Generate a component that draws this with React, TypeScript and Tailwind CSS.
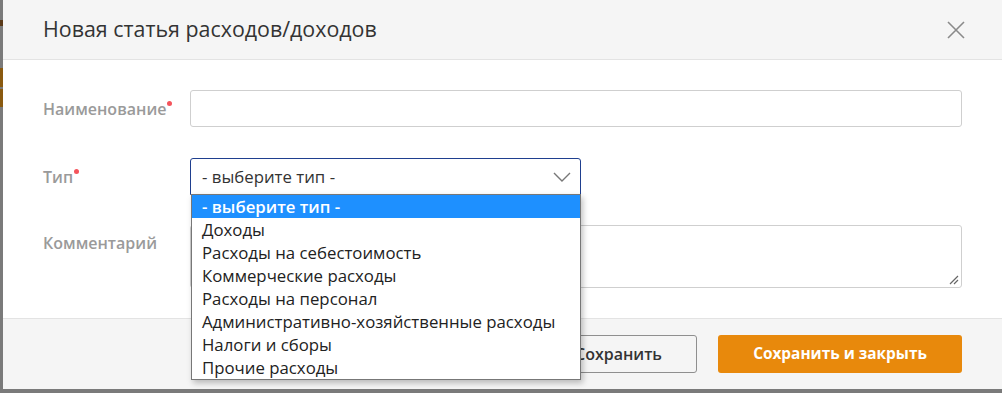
import React from 'react';

const OPTIONS = [
    '- выберите тип -',
    'Доходы',
    'Расходы на себестоимость',
    'Коммерческие расходы',
    'Расходы на персонал',
    'Административно-хозяйственные расходы',
    'Налоги и сборы',
    'Прочие расходы',
];

const Required = () => (
    <span className="absolute -right-[6px] top-[3px] w-[5px] h-[5px] rounded-full bg-[#f4545c]" />
);

const App: React.FC = () => {
    return (
        <div className="w-[1002px] h-[393px] overflow-hidden bg-[#7a7a7a] flex font-['Open_Sans',_sans-serif]">
            {/* page behind the modal */}
            <div className="w-[3px] shrink-0 flex flex-col">
                <div className="h-[20px]" />
                <div className="h-[6px] bg-[#5a3a1a]" />
                <div className="h-[42px]" />
                <div className="h-[19px] bg-[#8a5a10]" />
                <div className="h-[2px]" />
                <div className="h-[18px] bg-[#8a5a10]" />
            </div>

            <div className="w-[999px] h-[389px] bg-white flex flex-col relative">
                {/* header */}
                <div className="h-[60px] shrink-0 bg-[#f5f5f5] border-b border-[#e3e3e3] flex items-center justify-between pl-[40px] pr-[36px]">
                    <h2 className="text-[21.4px] text-[#333]">Новая статья расходов/доходов</h2>
                    <svg width="20" height="20" viewBox="0 0 20 20" className="text-[#8a8a8a]">
                        <path d="M2 2 L18 18 M18 2 L2 18" stroke="currentColor" strokeWidth="1.6" fill="none" />
                    </svg>
                </div>

                {/* body */}
                <div className="flex-1 flex flex-col pl-[40px] pr-[40px] pt-[30px] gap-[31px]">
                    <div className="flex items-center">
                        <label className="w-[147px] shrink-0 text-[16px] font-semibold text-[#9a9a9a]">
                            <span className="relative">Наименование<Required /></span>
                        </label>
                        <div className="flex-1 h-[37px] border border-[#cfcfcf] rounded-[3px] bg-white" />
                    </div>

                    <div className="flex items-center">
                        <label className="w-[147px] shrink-0 text-[16px] font-semibold text-[#9a9a9a]">
                            <span className="relative">Тип<Required /></span>
                        </label>
                        <div className="relative w-[391px]">
                            <div className="h-[37px] border border-[#1f3f8f] rounded-t-[3px] bg-white flex items-center justify-between pl-[11px] pr-[9px]">
                                <span className="text-[16.8px] text-[#333]">- выберите тип -</span>
                                <svg width="18" height="10" viewBox="0 0 18 10" className="text-[#777]">
                                    <path d="M1 1 L9 9 L17 1" stroke="currentColor" strokeWidth="1.4" fill="none" />
                                </svg>
                            </div>
                            <ul className="absolute z-10 left-[1px] right-0 top-[36px] border border-[#777] bg-white shadow-[2px_3px_6px_rgba(0,0,0,0.25)]">
                                {OPTIONS.map((o, i) => (
                                    <li
                                        key={o}
                                        className={`h-[23px] leading-[23px] pl-[10px] text-[16.8px] ${
                                            i === 0 ? 'bg-[#1e90ff] text-white font-semibold' : 'text-[#222]'
                                        }`}
                                    >
                                        {o}
                                    </li>
                                ))}
                            </ul>
                        </div>
                    </div>

                    <div className="flex items-start -mt-[1px]">
                        <label className="w-[147px] shrink-0 text-[16px] font-semibold text-[#9a9a9a] pt-[6px]">Комментарий</label>
                        <div className="flex-1 h-[63px] border border-[#cfcfcf] rounded-[3px] bg-white relative">
                            <svg width="10" height="10" viewBox="0 0 10 10" className="absolute right-[2px] bottom-[2px] text-[#666]">
                                <path d="M9 1 L1 9 M9 5 L5 9" stroke="currentColor" strokeWidth="1.2" fill="none" />
                            </svg>
                        </div>
                    </div>
                </div>

                {/* footer */}
                <div className="h-[71px] shrink-0 bg-[#f5f5f5] border-t border-[#e3e3e3] flex items-center justify-end gap-[21px] pr-[40px]">
                    <button className="w-[157px] h-[38px] border border-[#8f8f8f] rounded-[3px] text-[16px] text-[#333] font-semibold bg-transparent">
                        Сохранить
                    </button>
                    <button className="w-[244px] h-[38px] rounded-[3px] bg-[#e8890c] text-white text-[15.4px] font-bold">
                        Сохранить и закрыть
                    </button>
                </div>
            </div>
        </div>
    );
};

export default App;
